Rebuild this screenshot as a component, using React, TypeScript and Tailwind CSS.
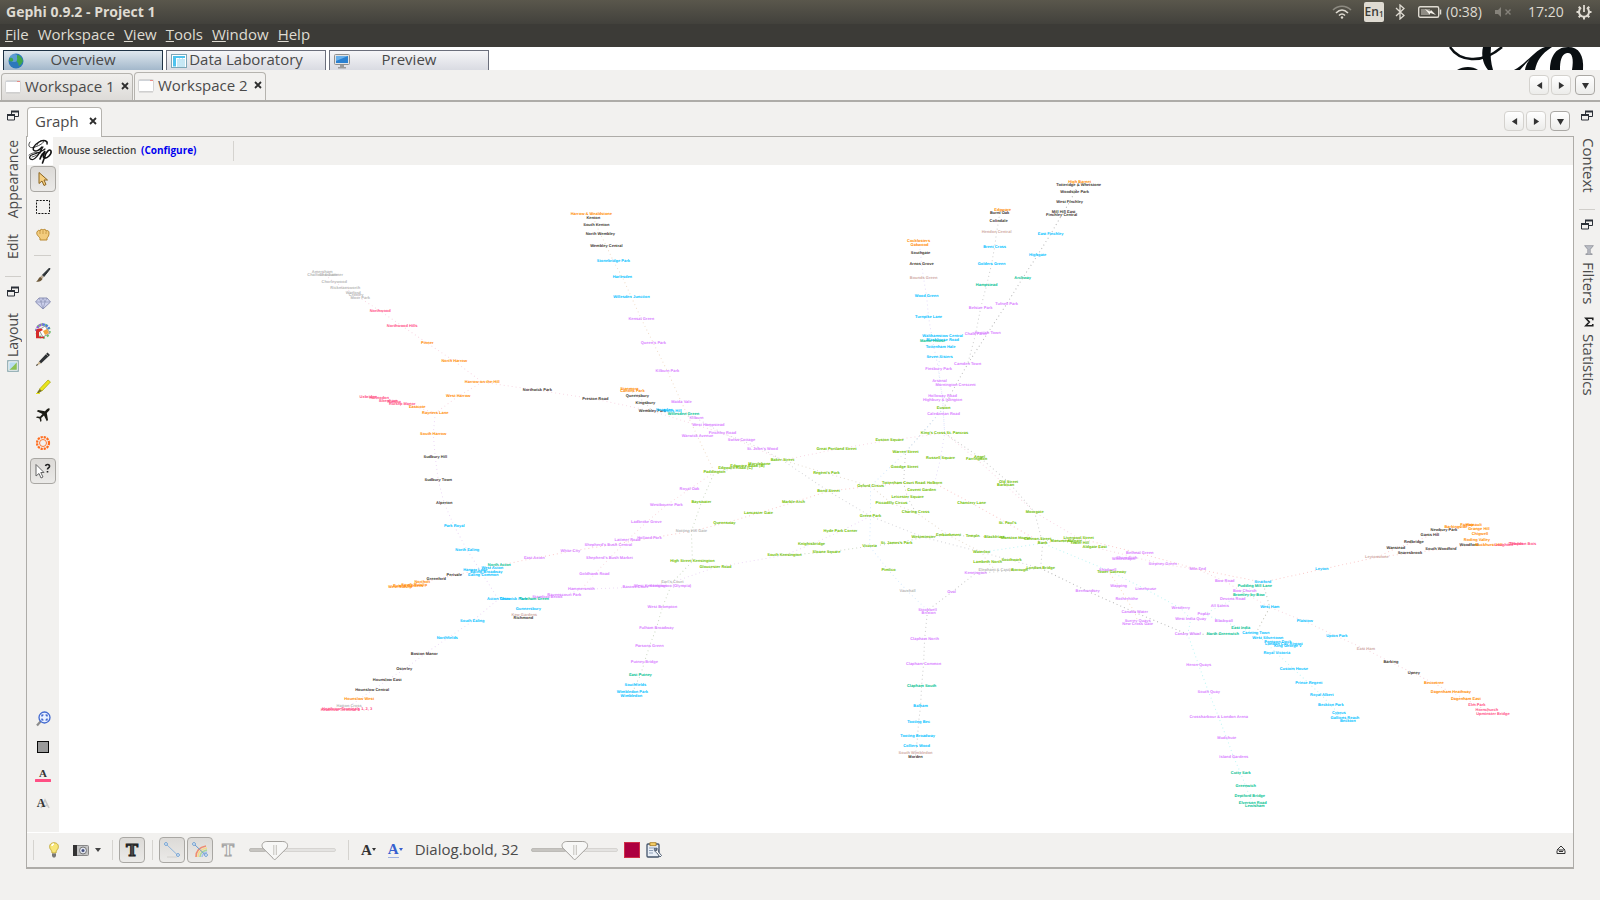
import { useState, type ReactNode } from "react";

type Station = [number, number, string, string];

const O = "#ff8a00";
const K = "#3b362f";
const B = "#00bfff";
const P = "#d97fff";
const G = "#70bf00";
const T = "#00bf90";
const R = "#ff4f84";
const S = "#b8b8b8";
const N = "#d0aca6";

const stations: Station[] = [
  [591, 214, "Harrow & Wealdstone", O],
  [593, 218, "Kenton", K],
  [596, 225, "South Kenton", K],
  [600, 234, "North Wembley", K],
  [606, 246, "Wembley Central", K],
  [613, 261, "Stonebridge Park", B],
  [622, 277, "Harlesden", B],
  [631, 297, "Willesden Junction", B],
  [641, 319, "Kensal Green", P],
  [653, 343, "Queen's Park", P],
  [667, 371, "Kilburn Park", P],
  [681, 402, "Maida Vale", P],
  [322, 272, "Amersham", S],
  [325, 275, "Chalfont & Latimer", S],
  [328, 275, "Chesham", S],
  [334, 282, "Chorleywood", S],
  [345, 288, "Rickmansworth", S],
  [353, 293, "Watford", S],
  [356, 295, "Croxley", S],
  [360, 298, "Moor Park", S],
  [380, 311, "Northwood", R],
  [402, 326, "Northwood Hills", R],
  [427, 343, "Pinner", O],
  [454, 361, "North Harrow", O],
  [482, 382, "Harrow-on-the-Hill", O],
  [537, 390, "Northwick Park", K],
  [595, 399, "Preston Road", K],
  [458, 396, "West Harrow", O],
  [368, 397, "Uxbridge", R],
  [379, 398, "Hillingdon", R],
  [388, 401, "Ickenham", R],
  [394, 402, "Ruislip", R],
  [402, 404, "Ruislip Manor", R],
  [417, 407, "Eastcote", O],
  [435, 413, "Rayners Lane", O],
  [433, 434, "South Harrow", O],
  [435, 457, "Sudbury Hill", K],
  [438, 480, "Sudbury Town", K],
  [629, 389, "Stanmore", O],
  [632, 391, "Canons Park", O],
  [637, 396, "Queensbury", K],
  [645, 403, "Kingsbury", K],
  [652, 411, "Wembley Park", K],
  [664, 410, "Neasden", B],
  [672, 411, "Dollis Hill", B],
  [683, 414, "Willesden Green", T],
  [696, 418, "Kilburn", P],
  [1079, 182, "High Barnet", O],
  [1078, 185, "Totteridge & Whetstone", K],
  [1074, 192, "Woodside Park", K],
  [1069, 202, "West Finchley", K],
  [1063, 212, "Mill Hill East", K],
  [1061, 215, "Finchley Central", K],
  [1050, 234, "East Finchley", B],
  [1037, 255, "Highgate", B],
  [1022, 278, "Archway", T],
  [1006, 304, "Tufnell Park", P],
  [987, 333, "Kentish Town", P],
  [1002, 210, "Edgware", O],
  [999, 213, "Burnt Oak", K],
  [998, 221, "Colindale", K],
  [996, 232, "Hendon Central", N],
  [994, 247, "Brent Cross", B],
  [991, 264, "Golders Green", B],
  [986, 285, "Hampstead", T],
  [980, 308, "Belsize Park", P],
  [975, 334, "Chalk Farm", P],
  [967, 364, "Camden Town", P],
  [918, 241, "Cockfosters", O],
  [919, 245, "Oakwood", O],
  [920, 253, "Southgate", K],
  [921, 264, "Arnos Grove", K],
  [923, 278, "Bounds Green", N],
  [926, 296, "Wood Green", B],
  [928, 317, "Turnpike Lane", B],
  [942, 336, "Walthamstow Central", B],
  [942, 340, "Blackhorse Road", B],
  [932, 341, "Manor House", T],
  [940, 347, "Tottenham Hale", B],
  [939, 357, "Seven Sisters", B],
  [938, 369, "Finsbury Park", P],
  [939, 381, "Arsenal", P],
  [955, 385, "Mornington Crescent", P],
  [942, 396, "Holloway Road", P],
  [942, 400, "Highbury & Islington", P],
  [943, 408, "Euston", G],
  [943, 414, "Caledonian Road", P],
  [944, 433, "King's Cross St. Pancras", G],
  [889, 440, "Euston Square", G],
  [708, 425, "West Hampstead", P],
  [722, 433, "Finchley Road", P],
  [697, 436, "Warwick Avenue", P],
  [741, 440, "Swiss Cottage", P],
  [762, 449, "St. John's Wood", P],
  [782, 460, "Baker Street", G],
  [836, 449, "Great Portland Street", G],
  [759, 464, "Marylebone", G],
  [747, 466, "Edgware Road (B)", G],
  [735, 468, "Edgware Road (C)", G],
  [714, 472, "Paddington", G],
  [905, 452, "Warren Street", G],
  [940, 458, "Russell Square", G],
  [904, 467, "Goodge Street", G],
  [826, 473, "Regent's Park", G],
  [979, 457, "Angel", G],
  [976, 459, "Farringdon", G],
  [1008, 482, "Old Street", G],
  [1005, 485, "Barbican", G],
  [870, 486, "Oxford Circus", G],
  [903, 483, "Tottenham Court Road", G],
  [934, 483, "Holborn", G],
  [921, 490, "Covent Garden", G],
  [828, 491, "Bond Street", G],
  [907, 497, "Leicester Square", G],
  [891, 503, "Piccadilly Circus", G],
  [915, 512, "Charing Cross", G],
  [689, 489, "Royal Oak", P],
  [666, 505, "Westbourne Park", P],
  [701, 502, "Bayswater", G],
  [793, 502, "Marble Arch", G],
  [758, 513, "Lancaster Gate", G],
  [724, 523, "Queensway", G],
  [691, 531, "Notting Hill Gate", S],
  [870, 516, "Green Park", G],
  [840, 531, "Hyde Park Corner", G],
  [811, 544, "Knightsbridge", G],
  [826, 552, "Sloane Square", G],
  [784, 555, "South Kensington", G],
  [869, 546, "Victoria", G],
  [896, 543, "St. James's Park", G],
  [923, 537, "Westminster", G],
  [948, 535, "Embankment", G],
  [972, 536, "Temple", G],
  [994, 537, "Blackfriars", G],
  [1015, 538, "Mansion House", G],
  [1037, 539, "Cannon Street", G],
  [1042, 543, "Bank", G],
  [971, 503, "Chancery Lane", G],
  [1034, 512, "Moorgate", G],
  [1007, 523, "St. Paul's", G],
  [981, 552, "Waterloo", G],
  [987, 562, "Lambeth North", G],
  [1011, 560, "Southwark", G],
  [1040, 568, "London Bridge", G],
  [995, 570, "Elephant & Castle", S],
  [1019, 570, "Borough", G],
  [975, 573, "Kennington", P],
  [888, 570, "Pimlico", G],
  [907, 591, "Vauxhall", S],
  [951, 592, "Oval", P],
  [927, 610, "Stockwell", P],
  [928, 613, "Brixton", P],
  [692, 561, "High Street Kensington", G],
  [715, 567, "Gloucester Road", G],
  [672, 582, "Earl's Court", S],
  [635, 587, "Barons Court", P],
  [650, 586, "West Kensington", P],
  [670, 586, "Kensington (Olympia)", P],
  [444, 503, "Alperton", K],
  [454, 526, "Park Royal", B],
  [467, 550, "North Ealing", B],
  [499, 565, "North Acton", T],
  [492, 568, "West Acton", B],
  [475, 570, "Hanger Lane", B],
  [486, 572, "Ealing Broadway", B],
  [483, 575, "Ealing Common", B],
  [454, 575, "Perivale", K],
  [436, 579, "Greenford", K],
  [422, 582, "Northolt", O],
  [414, 585, "South Ruislip", O],
  [408, 586, "Ruislip Gardens", O],
  [400, 587, "West Ruislip", O],
  [534, 558, "East Acton", P],
  [570, 551, "White City", P],
  [608, 545, "Shepherd's Bush Central", P],
  [649, 538, "Holland Park", P],
  [627, 540, "Latimer Road", P],
  [646, 522, "Ladbroke Grove", P],
  [609, 558, "Shepherd's Bush Market", P],
  [594, 574, "Goldhawk Road", P],
  [581, 589, "Hammersmith", P],
  [564, 595, "Ravenscourt Park", P],
  [547, 597, "Stamford Brook", P],
  [498, 599, "Acton Town", B],
  [513, 599, "Chiswick Park", B],
  [534, 599, "Turnham Green", T],
  [528, 609, "Gunnersbury", B],
  [524, 615, "Kew Gardens", N],
  [523, 618, "Richmond", K],
  [472, 621, "South Ealing", B],
  [447, 638, "Northfields", B],
  [424, 654, "Boston Manor", K],
  [404, 669, "Osterley", K],
  [387, 680, "Hounslow East", K],
  [372, 690, "Hounslow Central", K],
  [359, 699, "Hounslow West", O],
  [349, 706, "Hatton Cross", S],
  [347, 709, "Heathrow Terminals 1, 2, 3", R],
  [340, 710, "Heathrow Terminal 4", R],
  [662, 607, "West Brompton", P],
  [656, 628, "Fulham Broadway", P],
  [649, 646, "Parsons Green", P],
  [644, 662, "Putney Bridge", P],
  [640, 675, "East Putney", T],
  [635, 685, "Southfields", B],
  [632, 692, "Wimbledon Park", B],
  [631, 696, "Wimbledon", B],
  [1060, 541, "Monument", G],
  [1078, 538, "Liverpool Street", G],
  [1079, 543, "Tower Hill", G],
  [1074, 541, "Aldgate", G],
  [1094, 547, "Aldgate East", G],
  [1139, 553, "Bethnal Green", P],
  [1126, 558, "Shoreditch", P],
  [1123, 559, "Whitechapel", P],
  [1162, 564, "Stepney Green", P],
  [1197, 569, "Mile End", P],
  [1107, 570, "Shadwell", P],
  [1111, 572, "Tower Gateway", G],
  [1118, 586, "Wapping", P],
  [1145, 589, "Limehouse", P],
  [1087, 591, "Bermondsey", P],
  [1126, 599, "Rotherhithe", P],
  [1134, 612, "Canada Water", P],
  [1137, 621, "Surrey Quays", P],
  [1137, 624, "New Cross Gate", P],
  [1224, 581, "Bow Road", P],
  [1262, 582, "Stratford", B],
  [1254, 586, "Pudding Mill Lane", T],
  [1244, 591, "Bow Church", P],
  [1248, 595, "Bromley-by-Bow", T],
  [1232, 599, "Devons Road", P],
  [1219, 606, "All Saints", P],
  [1269, 607, "West Ham", B],
  [1180, 608, "Westferry", P],
  [1203, 614, "Poplar", P],
  [1190, 619, "West India Quay", P],
  [1223, 621, "Blackwall", P],
  [1240, 628, "East India", T],
  [1187, 634, "Canary Wharf", P],
  [1222, 634, "North Greenwich", T],
  [1255, 633, "Canning Town", B],
  [1267, 638, "West Silvertown", B],
  [1277, 642, "Pontoon Dock", B],
  [1283, 644, "London City Airport", B],
  [1287, 646, "King George V", B],
  [1276, 653, "Royal Victoria", B],
  [1293, 669, "Custom House", B],
  [1304, 621, "Plaistow", B],
  [1336, 636, "Upton Park", B],
  [1365, 649, "East Ham", N],
  [1390, 662, "Barking", K],
  [1413, 673, "Upney", K],
  [1433, 683, "Becontree", O],
  [1450, 692, "Dagenham Heathway", O],
  [1465, 699, "Dagenham East", O],
  [1476, 705, "Elm Park", R],
  [1486, 710, "Hornchurch", R],
  [1492, 714, "Upminster Bridge", R],
  [1198, 665, "Heron Quays", P],
  [1208, 692, "South Quay", P],
  [1218, 717, "Crossharbour & London Arena", P],
  [1226, 738, "Mudchute", P],
  [1233, 757, "Island Gardens", P],
  [1240, 773, "Cutty Sark", T],
  [1245, 786, "Greenwich", T],
  [1249, 796, "Deptford Bridge", T],
  [1252, 803, "Elverson Road", T],
  [1254, 806, "Lewisham", T],
  [1308, 683, "Prince Regent", B],
  [1321, 695, "Royal Albert", B],
  [1330, 705, "Beckton Park", B],
  [1338, 713, "Cyprus", B],
  [1344, 718, "Gallions Reach", B],
  [1347, 721, "Beckton", B],
  [1321, 569, "Leyton", B],
  [1376, 557, "Leytonstone", N],
  [1395, 548, "Wanstead", K],
  [1409, 553, "Snaresbrook", K],
  [1413, 542, "Redbridge", K],
  [1429, 535, "Gants Hill", K],
  [1443, 530, "Newbury Park", K],
  [1455, 527, "Barkingside", O],
  [1466, 525, "Fairlop", O],
  [1473, 525, "Hainault", O],
  [1478, 529, "Grange Hill", O],
  [1479, 534, "Chigwell", O],
  [1476, 540, "Roding Valley", O],
  [1440, 549, "South Woodford", K],
  [1468, 545, "Woodford", K],
  [1488, 545, "Buckhurst Hill", O],
  [1503, 545, "Loughton", R],
  [1515, 544, "Debden", R],
  [1522, 544, "Theydon Bois", R],
  [924, 639, "Clapham North", P],
  [923, 664, "Clapham Common", P],
  [921, 686, "Clapham South", T],
  [920, 706, "Balham", B],
  [918, 722, "Tooting Bec", B],
  [917, 736, "Tooting Broadway", B],
  [916, 746, "Colliers Wood", B],
  [915, 753, "South Wimbledon", N],
  [915, 757, "Morden", K],
];

const routes: { stroke: string; stops: string }[] = [
  { stroke: "#f0dcc8", stops: "Harrow & Wealdstone|Kenton|South Kenton|North Wembley|Wembley Central|Stonebridge Park|Harlesden|Willesden Junction|Kensal Green|Queen's Park|Kilburn Park|Maida Vale|Warwick Avenue|Paddington" },
  { stroke: "#e6dcd0", stops: "Baker Street|Regent's Park|Oxford Circus|Piccadilly Circus|Charing Cross|Embankment|Waterloo|Lambeth North|Elephant & Castle" },
  { stroke: "#f8d8e4", stops: "Amersham|Chalfont & Latimer|Chorleywood|Rickmansworth|Moor Park|Northwood|Northwood Hills|Pinner|North Harrow|Harrow-on-the-Hill|Northwick Park|Preston Road|Wembley Park|Finchley Road|Baker Street|Great Portland Street|Euston Square|King's Cross St. Pancras|Farringdon|Barbican|Moorgate|Liverpool Street" },
  { stroke: "#f8d8e4", stops: "Harrow-on-the-Hill|West Harrow|Rayners Lane|Eastcote|Ruislip Manor|Uxbridge" },
  { stroke: "#ecd9f5", stops: "Rayners Lane|South Harrow|Sudbury Hill|Sudbury Town|Alperton|Park Royal|North Ealing|Ealing Common|Acton Town|South Ealing|Northfields|Boston Manor|Osterley|Hounslow East|Hounslow Central|Hounslow West|Hatton Cross" },
  { stroke: "#ecd9f5", stops: "Acton Town|Turnham Green|Stamford Brook|Ravenscourt Park|Hammersmith|Barons Court|Earl's Court|Gloucester Road|South Kensington|Knightsbridge|Hyde Park Corner|Green Park" },
  { stroke: "#e4dcf8", stops: "Cockfosters|Southgate|Arnos Grove|Bounds Green|Wood Green|Turnpike Lane|Manor House|Finsbury Park|Arsenal|Holloway Road|Caledonian Road|King's Cross St. Pancras|Russell Square|Holborn" },
  { stroke: "#d4d4d8", stops: "Stanmore|Queensbury|Kingsbury|Wembley Park|Willesden Green|Kilburn|West Hampstead|Finchley Road|Swiss Cottage|St. John's Wood|Baker Street|Bond Street|Green Park|Westminster|Waterloo|Southwark|London Bridge" },
  { stroke: "#b8b8b8", stops: "London Bridge|Bermondsey|Canada Water|Canary Wharf|North Greenwich" },
  { stroke: "#c4c4b8", stops: "Canning Town|West Ham|Stratford" },
  { stroke: "#b8b8b8", stops: "High Barnet|Woodside Park|West Finchley|Finchley Central|East Finchley|Highgate|Archway|Tufnell Park|Kentish Town|Camden Town|Mornington Crescent|Euston" },
  { stroke: "#cccccc", stops: "Euston|Warren Street|Goodge Street|Tottenham Court Road|Leicester Square|Charing Cross" },
  { stroke: "#cccccc", stops: "Edgware|Burnt Oak|Colindale|Hendon Central|Brent Cross|Golders Green|Hampstead|Belsize Park|Chalk Farm|Camden Town" },
  { stroke: "#cccccc", stops: "King's Cross St. Pancras|Angel|Old Street|Moorgate|Bank|London Bridge|Borough|Kennington|Oval|Stockwell|Clapham North|Clapham Common|Clapham South|Balham|Tooting Bec|Tooting Broadway|Colliers Wood|South Wimbledon|Morden" },
  { stroke: "#d4e8fc", stops: "Seven Sisters|Finsbury Park|Highbury & Islington|King's Cross St. Pancras" },
  { stroke: "#d4e8fc", stops: "Euston|Warren Street|Oxford Circus|Green Park|Victoria|Pimlico|Vauxhall|Stockwell" },
  { stroke: "#fbcaca", stops: "West Ruislip|Northolt|Greenford|Perivale|North Acton|East Acton|White City|Shepherd's Bush Central|Holland Park|Notting Hill Gate|Queensway|Lancaster Gate|Marble Arch|Bond Street|Oxford Circus|Tottenham Court Road|Holborn|Chancery Lane|St. Paul's|Bank|Liverpool Street|Bethnal Green|Mile End|Stratford|Leyton|Leytonstone|Wanstead|Redbridge|Gants Hill|Newbury Park|Hainault" },
  { stroke: "#fbcaca", stops: "Leytonstone|Snaresbrook|South Woodford|Woodford|Buckhurst Hill|Loughton|Theydon Bois" },
  { stroke: "#fadce0", stops: "Paddington|Royal Oak|Westbourne Park|Ladbroke Grove|Latimer Road|Shepherd's Bush Market|Goldhawk Road|Hammersmith" },
  { stroke: "#ccd8c4", stops: "Edgware Road (C)|Paddington|Bayswater|Notting Hill Gate|High Street Kensington|Earl's Court|West Brompton|Fulham Broadway|Parsons Green|Putney Bridge|East Putney|Southfields|Wimbledon" },
  { stroke: "#ccd8c4", stops: "South Kensington|Sloane Square|Victoria|St. James's Park|Westminster|Embankment|Temple|Blackfriars|Mansion House|Cannon Street|Tower Hill" },
  { stroke: "#f6d6de", stops: "Aldgate East|Stepney Green|Mile End|Bow Road|Bromley-by-Bow|West Ham|Plaistow|Upton Park|East Ham|Barking|Upney|Becontree|Dagenham Heathway|Dagenham East|Elm Park|Upminster Bridge" },
  { stroke: "#f8dcc0", stops: "Shadwell|Wapping|Rotherhithe|Canada Water|Surrey Quays" },
  { stroke: "#bdf5f5", stops: "Waterloo|Bank|Shadwell|Limehouse|Westferry|West India Quay|Canary Wharf|Heron Quays|South Quay|Crossharbour & London Arena|Mudchute|Island Gardens|Cutty Sark|Greenwich|Deptford Bridge|Lewisham" },
  { stroke: "#bdf5f5", stops: "Poplar|Blackwall|East India|Canning Town|Royal Victoria|Custom House|Prince Regent|Royal Albert|Beckton Park|Cyprus|Beckton" },
  { stroke: "#d0f2ee", stops: "Poplar|All Saints|Devons Road|Bow Church|Pudding Mill Lane" },
];

const place = new Map(stations.map(([x, y, name]) => [name, `${x},${y}`]));

function TubeGraph() {
  return (
    <svg role="img" aria-label="Graph" viewBox="59 165 1513 667" className="block min-h-0 w-full flex-1">
      <g fill="none" strokeWidth="1" strokeDasharray="1 3">
        {routes.map((r, i) => (
          <polyline key={i} stroke={r.stroke} points={r.stops.split("|").map((s) => place.get(s)).join(" ")} />
        ))}
      </g>
      <g className="font-['Liberation_Sans',sans-serif] text-[4px] font-bold" textAnchor="middle" textRendering="geometricPrecision">
        {stations.map(([x, y, name, fill]) => (
          <text key={name} x={x} y={y + 1} fill={fill}>
            {name}
          </text>
        ))}
      </g>
    </svg>
  );
}

function Icon({ children, className = "size-4" }: { children: ReactNode; className?: string }) {
  return (
    <svg viewBox="0 0 16 16" className={`shrink-0 ${className}`} fill="none" aria-hidden="true">
      {children}
    </svg>
  );
}

function GephiLogo({ className }: { className: string }) {
  return (
    <svg viewBox="0 0 26 27" className={className} fill="none" stroke="#111" strokeLinecap="round" aria-hidden="true">
      <path d="M20 6C21 3 17 1 12 4C7 7 5 11 7 12.500C9 14 13 12 15 9" strokeWidth="1.4" />
      <path d="M3 4C0 8 3 11 8 9C14 7 18 4 16 2.500C14 2 11 4 10 7" strokeWidth="0.8" />
      <path d="M16 9C13 13 11 20 6 21.500C2 22 1 18 6 16.500C11 15 14 14 18 11" strokeWidth="1.2" />
      <path d="M2 17C6 14 11 14 14 15M5 19C9 18 12 16 14 14" strokeWidth="0.7" />
      <path d="M13 21C14 17 16 15 18 13C17 16 15 19 17 20C20 21 25 16 24 13C23 10 19 14 18 18L15.500 25" strokeWidth="1.6" />
    </svg>
  );
}

function Banner() {
  return (
    <svg viewBox="0 0 150 23" className="h-[23px] w-[150px]" fill="none" aria-hidden="true">
      <path d="M1 0C10 14 32 18 53 0" stroke="#0a0f12" strokeWidth="2.5" />
      <path d="M34 0H42C41 9 42 16 44 23H39C34 17 32 8 34 0Z" fill="#0a0f12" />
      <path d="M8 23C14 19 24 19 29 23Z" fill="#0a0f12" />
      <path d="M65 23C77 17 86 3 96 0H103C92 7 88 14 86 23H76C77 17 80 12 86 7C80 13 75 18 71 23Z" fill="#0a0f12" />
      <path d="M101 23C101 11 106 0 119 0C130 0 135 8 134 23H123C125 11 123 5 118 6C112 7 111 15 111 23Z" fill="#0a0f12" />
    </svg>
  );
}

function Restore() {
  return (
    <button aria-label="Restore" className="flex">
      <svg viewBox="0 0 12 11" className="h-[11px] w-3" fill="#f2f1ef" aria-hidden="true">
        <path d="M4.500 1.500H11.500V6.500H4.500Z" stroke="#2c3138" />
        <path d="M4 1.500H12" stroke="#2c3138" strokeWidth="2" />
        <path d="M0.500 5.500H7.500V10H0.500Z" stroke="#2c3138" />
        <path d="M0 5H8" stroke="#2c3138" strokeWidth="2" />
      </svg>
    </button>
  );
}

function Stepper({ label, points, strong = false }: { label: string; points: string; strong?: boolean }) {
  return (
    <button
      aria-label={label}
      className={`flex size-5 items-center justify-center rounded-[4px] border bg-linear-to-b from-white to-[#ececea] ${strong ? "border-[#aaa8a4]" : "border-[#d4d2ce]"}`}
    >
      <svg viewBox="0 0 8 8" className="size-[7px]" fill="#333" aria-hidden="true">
        <polygon points={points} />
      </svg>
    </button>
  );
}

function Steppers() {
  return (
    <div className="flex gap-[2px]">
      <Stepper label="Scroll left" points="7,0 7,8 1,4" />
      <Stepper label="Scroll right" points="1,0 1,8 7,4" />
      <div className="ml-[2px] flex">
        <Stepper label="Show list" points="0,1 8,1 4,8" strong />
      </div>
    </div>
  );
}

function CloseMark({ label }: { label: string }) {
  return (
    <button aria-label={label} className="flex">
      <svg viewBox="0 0 8 8" className="size-2" stroke="#2e2e2e" strokeWidth="1.8" aria-hidden="true">
        <path d="M1 1L7 7M7 1L1 7" />
      </svg>
    </button>
  );
}

function WorkspaceTab({ name, active = false }: { name: string; active?: boolean }) {
  return (
    <div
      className={`flex items-center gap-1 rounded-t-[4px] border border-b-0 border-[#b5b3ae] px-[3px] pb-[3px] ${active ? "h-7 bg-[#f2f1ef]" : "h-[27px] bg-linear-to-b from-[#f0efed] to-[#dddbd8]"}`}
    >
      <Icon>
        <rect x="0.500" y="2.500" width="15" height="12" rx="1" fill="#fff" stroke="#d5d5d5" />
        <path d="M1 3.500H12" stroke="#cfd3d8" />
        <path d="M12 3.500H15" stroke="#e98a84" />
        <path d="M1 15H15" stroke="#c9c9c9" />
      </Icon>
      <button className="w-[92px] text-left whitespace-nowrap">{name}</button>
      <CloseMark label={`Close ${name}`} />
    </div>
  );
}

function Perspective({ name, icon, active = false }: { name: string; icon: ReactNode; active?: boolean }) {
  return (
    <button
      className={`flex h-5 w-40 items-center border border-b-0 pr-5 pl-1 ${active ? "border-[#1f3346] bg-linear-to-b from-[#dfe7ee] to-[#a3b8cb]" : "border-[#6b6f7c] bg-linear-to-b from-[#f6f6f8] to-[#d9dbe2]"}`}
    >
      {icon}
      <span className="flex-1 pb-[3px] text-center whitespace-nowrap">{name}</span>
    </button>
  );
}

function Tool({ label, pressed = false, children }: { label: string; pressed?: boolean; children: ReactNode }) {
  return (
    <button
      aria-label={label}
      aria-pressed={pressed}
      className={`flex size-[26px] items-center justify-center rounded-[4px] border ${pressed ? "border-[#a9a7a3] bg-linear-to-b from-[#dcdad7] to-[#ebeae8]" : "border-transparent"}`}
    >
      {children}
    </button>
  );
}

function Slider({ label, initial }: { label: string; initial: number }) {
  const [value, setValue] = useState(initial);
  return (
    <div className="relative h-[26px] w-[87px]">
      <svg viewBox="0 0 87 26" className="size-full" aria-hidden="true">
        <rect x="0.500" y="11.500" width="86" height="3" rx="1.500" fill="#e4e3e1" stroke="#d6d4d1" />
        <rect x="0.500" y="11.500" width={value * 0.6 + 5} height="3" rx="1.500" fill="#c6c4c0" stroke="#bdbbb7" />
        <g transform={`translate(${value * 0.6 + 1} 0)`}>
          <path d="M6 4.500H22C26 4.500 28 8 26 11L16 21C14.500 23 13 23 12 21L2 11C0 8 2 4.500 6 4.500Z" fill="#f7f7f6" stroke="#a2a09c" />
          <path d="M13 8V18M15.500 8V18" stroke="#c2c0bc" />
        </g>
      </svg>
      <input
        type="range"
        aria-label={label}
        value={value}
        onChange={(e) => setValue(Number(e.target.value))}
        className="absolute inset-0 size-full opacity-0"
      />
    </div>
  );
}

function Rule({ className = "h-5" }: { className?: string }) {
  return <div className={`w-px bg-[#d5d3cf] ${className}`} />;
}

export default function App() {
  return (
    <div className="flex min-h-screen flex-col bg-[#f2f1ef] font-['Open_Sans','Noto_Sans',sans-serif] text-[15px] leading-5 text-[#4a4a4a]">
      <header className="bg-[#3c3b37] text-[#dfdbd2]">
        <div className="flex h-6 items-center justify-between bg-linear-to-b from-[#5a574c] to-[#42413c] pr-2 pl-[6px]">
          <h1 className="text-[14px] font-bold">Gephi 0.9.2 - Project 1</h1>
          <div className="flex items-center text-[14px]">
            <svg viewBox="0 0 20 14" className="h-[14px] w-5" fill="none" stroke="#dfdbd2" strokeWidth="1.6" aria-hidden="true">
              <path d="M1 5C6 0 14 0 19 5" stroke="#8d8a81" />
              <path d="M4 8C8 4 12 4 16 8M7 10.500C9 8.500 11 8.500 13 10.500" />
              <circle cx="10" cy="12.500" r="1.200" fill="#dfdbd2" stroke="none" />
            </svg>
            <span className="ml-3 flex size-5 items-center justify-center rounded-[2px] bg-[#dfdbd2] text-[12px] font-semibold text-[#3c3b37]">
              En<sub className="text-[8px]">1</sub>
            </span>
            <svg viewBox="0 0 10 16" className="ml-[11px] h-4 w-[10px]" fill="none" stroke="#dfdbd2" strokeWidth="1.3" aria-hidden="true">
              <path d="M1 4L9 11.500L5 15V1L9 4.500L1 12" />
            </svg>
            <svg viewBox="0 0 24 12" className="ml-[13px] h-3 w-6" fill="none" aria-hidden="true">
              <rect x="0.700" y="0.700" width="20" height="10.600" rx="1.500" stroke="#dfdbd2" strokeWidth="1.400" />
              <rect x="3" y="3" width="9" height="6" fill="#8f8c84" />
              <path d="M22.500 3.500V8.500" stroke="#dfdbd2" strokeWidth="1.500" />
              <path d="M7 3L12 5.500L13 4L18 9L12.500 7L11.500 8.500Z" fill="#f3f0e8" />
            </svg>
            <span className="ml-1 w-[37px]">(0:38)</span>
            <svg viewBox="0 0 17 10" className="ml-3 h-[10px] w-[17px]" fill="#86837b" aria-hidden="true">
              <path d="M0 3H3L6 0V10L3 7H0Z" />
              <path d="M10.500 2.500L15.500 7.500M15.500 2.500L10.500 7.500" stroke="#86837b" strokeWidth="1.400" />
            </svg>
            <span className="ml-4 w-9">17:20</span>
            <svg viewBox="0 0 16 16" className="ml-3 size-4" fill="none" stroke="#dfdbd2" aria-hidden="true">
              <path d="M5 3.800A5 5 0 1 0 11 3.800" strokeWidth="2" />
              <path d="M8 1V8" strokeWidth="1.800" />
              <path d="M0.500 8H3M13 8H15.500M8 13V15.500M2.700 2.700L4.500 4.500M13.300 2.700L11.500 4.500M2.700 13.300L4.500 11.500M13.300 13.300L11.500 11.500" strokeWidth="2" />
            </svg>
          </div>
        </div>
        <nav className="flex h-[23px] items-start gap-[9px] pl-[5px]">
          <button><u>F</u>ile</button>
          <button>Workspace</button>
          <button><u>V</u>iew</button>
          <button><u>T</u>ools</button>
          <button><u>W</u>indow</button>
          <button><u>H</u>elp</button>
        </nav>
      </header>

      <div className="flex h-[23px] items-end justify-between bg-white pr-[1px] pl-[3px]">
        <div className="flex gap-[3px]">
          <Perspective
            active
            name="Overview"
            icon={
              <Icon>
                <circle cx="8" cy="8" r="7.500" fill="#2c78bb" />
                <circle cx="6" cy="5" r="4" fill="#7db5e2" opacity="0.600" />
                <path d="M9 2C12 2 14 5 15 8C14 10 13 12 11 13C10 11 11 10 9 9C8 7 10 6 9 5ZM2 5C4 4 6 6 5 8C3 9 2 8 1 8Z" fill="#3fa64a" />
              </Icon>
            }
          />
          <Perspective
            name="Data Laboratory"
            icon={
              <Icon>
                <rect x="0.500" y="1.500" width="15" height="13" fill="#fff" stroke="#7da7b8" />
                <path d="M2 3H14V5H2ZM2 5H5V13.500H2Z" fill="#4fc3ee" />
                <path d="M6 7H14M6 9H14M6 11H14M6 13H14" stroke="#8ed2ec" />
                <path d="M8.500 5V14M11.500 5V14" stroke="#c8e6f2" />
              </Icon>
            }
          />
          <Perspective
            name="Preview"
            icon={
              <Icon>
                <rect x="0.500" y="1.500" width="15" height="10" rx="1" fill="#e3e3e3" stroke="#909090" />
                <rect x="2" y="3" width="12" height="7" fill="#2a80d0" />
                <path d="M2 3H14L2 8Z" fill="#69b0ea" />
                <path d="M6 12H10V14H12V15.500H4V14H6Z" fill="#9a9a9a" />
              </Icon>
            }
          />
        </div>
        <Banner />
      </div>

      <div className="flex h-8 items-end justify-between border-b-2 border-[#aeaca8] pr-[5px] pl-px">
        <div className="flex items-end gap-px">
          <WorkspaceTab name="Workspace 1" />
          <WorkspaceTab name="Workspace 2" active />
        </div>
        <div className="pb-[5px]">
          <Steppers />
        </div>
      </div>

      <div className="flex flex-1 pb-8">
        <aside className="flex w-[26px] flex-col items-center pt-2 text-[14px]">
          <Restore />
          <button className="flex h-[97px] items-end">
            <span className="rotate-180 [writing-mode:vertical-rl]">Appearance</span>
          </button>
          <button className="mt-[16px] flex">
            <span className="rotate-180 [writing-mode:vertical-rl]">Edit</span>
          </button>
          <div className="mt-[17px] h-px w-4 bg-[#d0ceca]" />
          <div className="mt-[9px] flex">
            <Restore />
          </div>
          <button className="mt-[16px] flex flex-col items-center gap-[3px]">
            <span className="rotate-180 [writing-mode:vertical-rl]">Layout</span>
            <Icon className="size-3">
              <rect x="1" y="1" width="14" height="14" fill="#fff" stroke="#86a5ab" strokeWidth="1.500" />
              <path d="M3 3H13V13H3Z" fill="#b9dcf0" />
              <path d="M13 3V13H3C6 11 9 8 13 3Z" fill="#8cc152" />
            </Icon>
          </button>
        </aside>

        <main className="flex min-w-0 flex-1 flex-col">
          <div className="flex h-[34px] items-end justify-between pr-[4px]">
            <div className="z-10 -mb-px ml-px flex h-[30px] items-center gap-[13px] rounded-t-[4px] border border-b-0 border-[#b5b3ae] bg-white pr-1 pb-[3px] pl-[7px]">
              <button className="w-[41px] text-left">Graph</button>
              <CloseMark label="Close Graph" />
            </div>
            <div className="pb-[5px]">
              <Steppers />
            </div>
          </div>

          <section className="flex flex-1 flex-col border border-b-2 border-[#aeaca8]">
            <div className="flex h-7 items-center text-[10px]">
              <div className="mr-[5px] flex h-full w-[26px] items-center bg-white">
                <GephiLogo className="h-[27px] w-[26px]" />
              </div>
              <span className="w-[83px] pb-[2px] font-semibold text-[#444]">Mouse selection</span>
              <a href="#configure" className="w-[92px] pb-[2px] font-bold text-[#0000f0]">(Configure)</a>
              <Rule />
            </div>

            <div className="flex flex-1">
              <div className="flex w-8 flex-col justify-between pt-px pb-4 pl-[3px]">
                <div className="flex flex-col gap-[2px]">
                  <Tool label="Direct selection" pressed>
                    <Icon>
                      <path d="M4 1.500L12.500 9H9L11 13.500L9 14.500L7 10L4 12.500Z" fill="#f5cf82" stroke="#8a6420" />
                    </Icon>
                  </Tool>
                  <Tool label="Rectangle selection">
                    <Icon>
                      <rect x="1.500" y="1.500" width="13" height="13" stroke="#111" strokeDasharray="2 1.200" />
                    </Icon>
                  </Tool>
                  <Tool label="Drag">
                    <Icon>
                      <path d="M2 5C3 3 4 3 5 4C5 2 7 2 8 3C9 2 11 2 11 4C13 3 14 4 14 6C14 9 13 10 12 11V13H5V11C3 9 1 7 2 5Z" fill="#f3cc7d" stroke="#b98a33" />
                      <path d="M5 4V7M8 3.500V7M11 4.500V7" stroke="#b98a33" strokeWidth="0.700" />
                    </Icon>
                  </Tool>
                  <div className="flex h-[10px] items-center pl-1">
                    <div className="h-px w-[17px] bg-[#d0ceca]" />
                  </div>
                  <Tool label="Painter">
                    <Icon>
                      <path d="M14.500 1L7.500 8L9 9.500L15 2Z" fill="#2b3034" stroke="#2b3034" />
                      <path d="M6 9L8 11" stroke="#b8a690" strokeWidth="2" />
                      <path d="M5.500 10C3 10.500 4 13 1 14.500C4 15.500 6.500 14 7.500 12Z" fill="#6d5838" />
                    </Icon>
                  </Tool>
                  <Tool label="Sizer">
                    <Icon>
                      <path d="M4 3H12L15.500 7L8 14L0.500 7Z" fill="#cdd1ec" stroke="#8d92b5" />
                      <path d="M1 7H15M4 3L6 7L8 14L10 7L12 3M6 7L8 3L10 7" stroke="#8d92b5" strokeWidth="0.700" />
                    </Icon>
                  </Tool>
                  <Tool label="Brush">
                    <Icon>
                      <circle cx="8" cy="8" r="6.500" stroke="#6ac36a" strokeWidth="2.500" strokeDasharray="2 2" />
                      <path d="M1.500 8A6.500 6.500 0 0 1 8 1.500" stroke="#9560d8" strokeWidth="2.500" strokeDasharray="2 1" />
                      <path d="M8 1.500A6.500 6.500 0 0 1 14 6" stroke="#4c79e0" strokeWidth="2.500" strokeDasharray="2 1" />
                      <path d="M4 7L10 3L15 10L8 14Z" fill="#fff" stroke="#9b9b9b" />
                      <path d="M1 8C2 5 6 5 8 7L4 9V14H1Z" fill="#d52b2b" />
                      <path d="M8 8L12 6L14 10L10 12Z" fill="#f2a43c" />
                      <path d="M1 14.500H9" stroke="#d52b2b" strokeWidth="1.500" />
                    </Icon>
                  </Tool>
                  <Tool label="Node pencil">
                    <Icon>
                      <path d="M12.500 1.500L15 4L6 12.500L4 10.500Z" fill="#2e3134" />
                      <path d="M11 3L13 5" stroke="#888" />
                      <path d="M4 10.500L6 12.500L1 15Z" fill="#c9b48e" />
                      <path d="M1 15L2 13L3 14Z" fill="#111" />
                    </Icon>
                  </Tool>
                  <Tool label="Edge pencil">
                    <Icon>
                      <path d="M13 1L15.500 3L7 12L4.500 10Z" fill="#e9e51c" stroke="#a6a20b" strokeWidth="0.700" />
                      <path d="M4.500 10L7 12L3 14.500L2 13.500Z" fill="#77741e" />
                      <path d="M1 14.500H5" stroke="#e9e51c" />
                    </Icon>
                  </Tool>
                  <Tool label="Shortest path">
                    <Icon>
                      <path d="M14.500 1.500C13.500 0.800 12 2 10 4.200L3 3L1.800 4.200L7.500 7L5 9.800L2 9.500L1 10.500L4.500 11.500L5.500 15L6.500 14L6.200 11L9 8.500L11.800 14.200L13 13L11.800 6C14 4 15.200 2.500 14.500 1.500Z" fill="#1b1b14" />
                    </Icon>
                  </Tool>
                  <Tool label="Heat map">
                    <Icon>
                      <circle cx="8" cy="8" r="6" stroke="#ff6b1c" strokeWidth="2.200" strokeDasharray="2.200 0.940" />
                      <circle cx="8" cy="8" r="3.500" stroke="#ff6b1c" strokeWidth="0.900" />
                    </Icon>
                  </Tool>
                  <Tool label="Edit" pressed>
                    <Icon>
                      <path d="M1 1.500L9 9.500H5.800L8 14L6 15L4 10.500L1 13Z" fill="#fff" stroke="#666" />
                      <path d="M10.500 3C11 1 15 1 14.500 3.500C14 5 12.500 5 12.500 6.500M12.500 8V9.500" stroke="#222" strokeWidth="1.600" />
                    </Icon>
                  </Tool>
                </div>
                <div className="flex flex-col gap-[2px]">
                  <Tool label="Center on graph">
                    <Icon>
                      <path d="M6 10L2 14.500" stroke="#8c8c8c" strokeWidth="2.200" />
                      <circle cx="9.500" cy="6.500" r="5.500" fill="#eaf1ff" stroke="#4169d0" strokeWidth="1.300" />
                      <path d="M7 5.500V4H8.500M10.500 4H12V5.500M12 7.500V9H10.500M8.500 9H7V7.500" stroke="#1d49c4" strokeWidth="1.200" />
                    </Icon>
                  </Tool>
                  <Tool label="Reset colors">
                    <Icon>
                      <rect x="2.500" y="2.500" width="11" height="11" fill="#9a9a9a" stroke="#0a0a0a" />
                    </Icon>
                  </Tool>
                  <Tool label="Reset label colors">
                    <Icon>
                      <text x="8" y="10" textAnchor="middle" fontSize="11" fontWeight="700" fill="#333" className="font-['Liberation_Serif',serif]">A</text>
                      <rect x="0" y="12" width="16" height="3" rx="0.500" fill="#ff4f84" />
                    </Icon>
                  </Tool>
                  <Tool label="Reset label visibility">
                    <Icon>
                      <path d="M6 13L10 5L14 13M7.500 10.500H12.500" stroke="#c9c9c9" strokeWidth="1.600" />
                      <text x="6" y="12" textAnchor="middle" fontSize="12" fontWeight="700" fill="#333" className="font-['Liberation_Serif',serif]">A</text>
                    </Icon>
                  </Tool>
                </div>
              </div>
              <div className="flex min-w-0 flex-1 bg-white">
                <TubeGraph />
              </div>
            </div>

            <div className="flex h-[35px] items-center border-t border-white pb-px pl-[6px]">
              <Rule />
              <button aria-label="Background colour" className="ml-3">
                <Icon>
                  <path d="M8 0.800C4 0.800 3 4 4 6.500C5 8 6 9 6 11H10C10 9 11 8 12 6.500C13 4 12 0.800 8 0.800Z" fill="#f8e678" stroke="#c2a93a" />
                  <path d="M6 4C6 3 7 2 8 2" stroke="#fff" strokeWidth="1.500" />
                  <path d="M6 11.500H10V14L9 15.500H7L6 14Z" fill="#777" />
                </Icon>
              </button>
              <button aria-label="Screenshot" className="ml-[11px] flex items-center gap-[6px]">
                <Icon>
                  <rect x="0.500" y="3.500" width="15" height="10" rx="1" fill="#c4c4c4" stroke="#888" />
                  <rect x="0" y="3" width="4" height="11" fill="#333" />
                  <circle cx="10" cy="8.500" r="3.500" fill="#dfe3ee" stroke="#777" />
                  <circle cx="10" cy="8.500" r="1.500" fill="#45507e" />
                </Icon>
                <svg viewBox="0 0 6 4" className="h-1 w-[6px]" fill="#444" aria-hidden="true">
                  <polygon points="0,0 6,0 3,4" />
                </svg>
              </button>
              <div className="ml-[11px] flex">
                <Rule />
              </div>
              <div className="ml-[6px] flex">
                <Tool label="Show node labels" pressed>
                  <Icon className="size-5">
                    <text x="8" y="13" textAnchor="middle" fontSize="13" fontWeight="700" fill="#4c4c4c" stroke="#222" strokeWidth="0.800" className="font-['DejaVu_Serif',serif]">T</text>
                  </Icon>
                </Tool>
              </div>
              <div className="ml-[7px] flex">
                <Rule />
              </div>
              <div className="ml-[6px] flex gap-[2px]">
                <Tool label="Show edges" pressed>
                  <Icon>
                    <path d="M2.500 2.500L13.500 13" stroke="#8db4dc" />
                    <circle cx="2" cy="2" r="1.400" fill="#fff" stroke="#6a9cd0" />
                    <circle cx="14" cy="13" r="1.400" fill="#fff" stroke="#6a9cd0" />
                    <path d="M3 15H13" stroke="#d2d0cd" />
                  </Icon>
                </Tool>
                <Tool label="Edge colour" pressed>
                  <Icon>
                    <path d="M4 15C4 9 8 5 14 4" stroke="#ee8c72" strokeWidth="1.600" />
                    <path d="M6 15C6 10 9 7 15 6" stroke="#f4d98a" strokeWidth="1.600" />
                    <path d="M8 15C8 11 11 9 15 8" stroke="#a9d69a" strokeWidth="1.600" />
                    <path d="M10 15C10 13 12 11 15 10" stroke="#a7bfea" strokeWidth="1.600" />
                    <path d="M2.500 2.500L13.500 13" stroke="#6a9cd0" />
                    <circle cx="2" cy="2" r="1.400" fill="#fff" stroke="#6a9cd0" />
                    <circle cx="14" cy="13" r="1.400" fill="#fff" stroke="#6a9cd0" />
                  </Icon>
                </Tool>
                <Tool label="Show edge labels">
                  <Icon className="size-5">
                    <text x="8" y="13" textAnchor="middle" fontSize="13" fontWeight="700" fill="#f6f6f5" stroke="#a3a3a3" strokeWidth="0.800" className="font-['DejaVu_Serif',serif]">T</text>
                  </Icon>
                </Tool>
              </div>
              <div className="ml-2 flex">
                <Slider label="Edge weight scale" initial={18} />
              </div>
              <div className="mr-3 ml-3 flex">
                <Rule />
              </div>
              <button aria-label="Label size mode" className="flex items-center text-[15px] font-bold text-[#333]">
                <span className="font-['Liberation_Serif',serif]">A</span>
                <svg viewBox="0 0 4 3" className="h-[3px] w-1" fill="#333" aria-hidden="true">
                  <polygon points="0,0 4,0 2,3" />
                </svg>
              </button>
              <button aria-label="Label color mode" className="ml-3 flex items-center text-[15px] font-bold text-[#3660cf]">
                <span className="border-b border-[#9fb2e2] font-['Liberation_Serif',serif] leading-4">A</span>
                <svg viewBox="0 0 4 3" className="h-[3px] w-1" fill="#3660cf" aria-hidden="true">
                  <polygon points="0,0 4,0 2,3" />
                </svg>
              </button>
              <button className="ml-3 w-[104px] pb-[2px] text-left whitespace-nowrap">Dialog.bold, 32</button>
              <div className="ml-3 flex">
                <Slider label="Label size scale" initial={48} />
              </div>
              <button aria-label="Label color" className="ml-[6px] size-4 border border-[#d03048] bg-[#ad003f]" />
              <button aria-label="Label attributes" className="ml-[6px]">
                <Icon>
                  <rect x="1" y="2" width="12" height="13" rx="1" fill="#e8eef6" stroke="#44546a" strokeWidth="1.300" />
                  <rect x="4" y="0.700" width="6" height="3" fill="#f4cf6a" stroke="#a77b1f" strokeWidth="0.800" />
                  <path d="M3 6H11M3 8.500H7M3 11H7" stroke="#8fa0b8" />
                  <path d="M9 6C7 9 10 10 11 11L14 15L15.500 13.500L12.500 10C13 7 11 6 10 6.500L11 8.500L9.500 9Z" fill="#fff" stroke="#44546a" strokeWidth="0.900" />
                </Icon>
              </button>
              <button aria-label="Expand settings" className="mr-[7px] ml-auto">
                <svg viewBox="0 0 10 10" className="size-[10px]" fill="none" stroke="#333" aria-hidden="true">
                  <path d="M5 1L9 5H1ZM1 5.500V8.500H9V5.500M3 6.500H7" />
                </svg>
              </button>
            </div>
          </section>
        </main>

        <aside className="flex w-[26px] flex-col items-center pt-2">
          <Restore />
          <button className="flex h-[88px] items-center pl-[3px]">
            <span className="[writing-mode:vertical-rl]">Context</span>
          </button>
          <div className="h-px w-4 bg-[#d0ceca]" />
          <div className="mt-[9px] flex">
            <Restore />
          </div>
          <button className="mt-[15px] flex flex-col items-center gap-[7px] pl-[3px]">
            <Icon className="size-[10px]">
              <path d="M1 1H15L10 7V14H13V15.500H3V14H6V7Z" fill="#b9bcc4" stroke="#80838c" />
            </Icon>
            <span className="[writing-mode:vertical-rl]">Filters</span>
          </button>
          <button className="mt-[13px] flex flex-col items-center gap-[7px] pl-[3px]">
            <Icon className="size-[10px]">
              <path d="M14 5V2H3L8.500 8L3 14H14V11" stroke="#222" strokeWidth="2.600" />
            </Icon>
            <span className="[writing-mode:vertical-rl]">Statistics</span>
          </button>
        </aside>
      </div>
    </div>
  );
}
